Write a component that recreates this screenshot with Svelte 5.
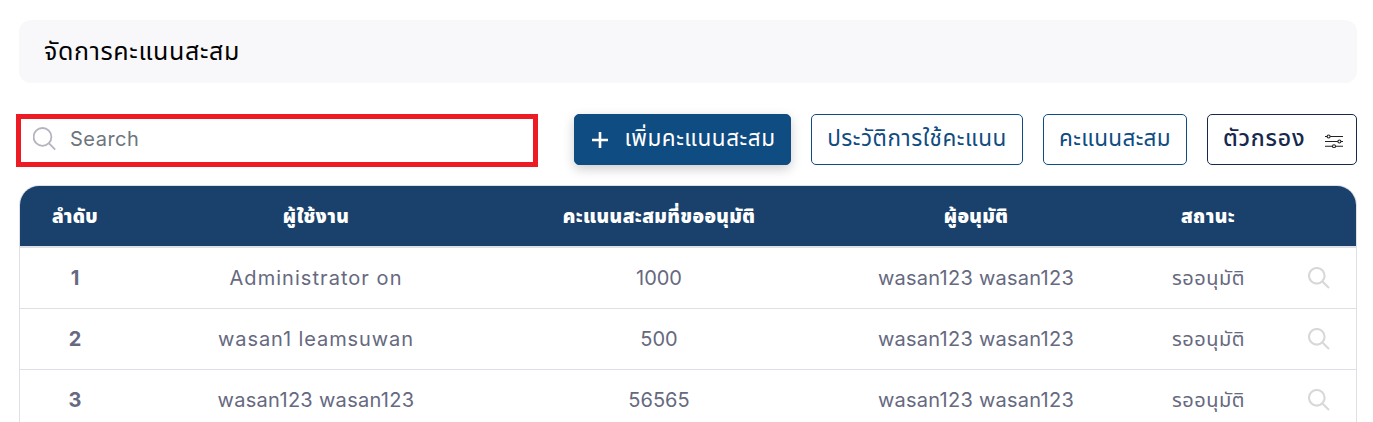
<script>
  const columns = ['ลำดับ', 'ผู้ใช้งาน', 'คะแนนสะสมที่ขออนุมัติ', 'ผู้อนุมัติ', 'สถานะ', ''];

  const rows = [
    { id: 1, user: 'Administrator on', tracking: 1.05, points: '1000', approver: 'wasan123 wasan123', status: 'รออนุมัติ' },
    { id: 2, user: 'wasan1 leamsuwan', tracking: 0.9, points: '500', approver: 'wasan123 wasan123', status: 'รออนุมัติ' },
    { id: 3, user: 'wasan123 wasan123', tracking: 0.3, points: '56565', approver: 'wasan123 wasan123', status: 'รออนุมัติ' }
  ];
</script>

<main>
  <header class="title"><h1>จัดการคะแนนสะสม</h1></header>

  <section class="toolbar">
    <label class="search">
      <svg width="24" height="24" viewBox="0 0 24 24" fill="none" stroke="#b5b4be" stroke-width="1.8">
        <circle cx="9.5" cy="9.9" r="8.9" />
        <path d="M15.8 16.2 22.2 22.6" />
      </svg>
      <input placeholder="Search" />
    </label>
    <button class="primary">
      <svg width="16" height="16" viewBox="0 0 16 16" stroke="#fff" stroke-width="2.6"><path d="M8 0v16M0 8h16" /></svg>
      <span>เพิ่มคะแนนสะสม</span>
    </button>
    <button class="history"><span>ประวัติการใช้คะแนน</span></button>
    <button class="points"><span>คะแนนสะสม</span></button>
    <button class="filter">
      <span>ตัวกรอง</span>
      <svg width="20" height="14" viewBox="0 0 20 14" fill="#fff" stroke="#222" stroke-width="1.1">
        <path d="M1 2.5h18M1 7.5h18M1 12.2h18" />
        <circle cx="4.6" cy="2.5" r="1.5" /><circle cx="15.4" cy="7.5" r="1.5" /><circle cx="10" cy="12.2" r="1.5" />
      </svg>
    </button>
  </section>

  <section class="table">
    <div class="row head">
      {#each columns as label}<div>{label}</div>{/each}
    </div>
    {#each rows as r}
      <div class="row">
        <div class="num">{r.id}</div>
        <div class="latin" style="letter-spacing: {r.tracking}px">{r.user}</div>
        <div class="latin">{r.points}</div>
        <div class="latin approver">{r.approver}</div>
        <div class="status">{r.status}</div>
        <div class="view">
          <svg width="22" height="22" viewBox="0 0 22 22" fill="none" stroke="#d8d8d8" stroke-width="2.1">
            <circle cx="8.8" cy="8.8" r="7.8" />
            <path d="M14.4 14.4 21 21" />
          </svg>
        </div>
      </div>
    {/each}
  </section>
</main>

<style>
  :global(body) { background: #fff; overflow: hidden; }
  main {
    box-sizing: border-box; height: 422px; padding: 20px 16px 0 19px; overflow: hidden;
    font-family: 'Noto Sans Thai', 'Inter', 'Open Sans', sans-serif;
  }
  .title {
    height: 63px; box-sizing: border-box; padding: 0 0 0 25px; border-radius: 12px;
    display: flex; align-items: center; background: #f8f8fb;
  }
  h1 { margin: 0; font-size: 25px; font-weight: 400; letter-spacing: .65px; color: #000; }
  .toolbar { display: flex; margin: 31px 0 0 -3px; height: 53px; align-items: flex-start; }
  .search {
    box-sizing: border-box; width: 522px; height: 53px; border: 5px solid #ed1c24;
    display: flex; align-items: center; padding: 0 0 3px 12px; gap: 13px; margin-right: 36px;
  }
  input { border: 0; outline: 0; padding: 0; flex: 1; background: none; font: 400 20px 'Inter', sans-serif; letter-spacing: .5px; }
  input::placeholder { color: #6c757d; opacity: 1; }
  button {
    box-sizing: border-box; height: 51px; border: 1px solid #0f4c81; border-radius: 5px; padding: 0 0 2px;
    display: flex; align-items: center; justify-content: center; background: #fff; color: #0f4c81;
    font: 400 22.5px 'Noto Sans Thai', 'Inter', sans-serif; letter-spacing: .55px; white-space: nowrap; flex: none;
  }
  .primary { width: 217px; margin-right: 20px; padding-left: 3px; background: #0f4c81; color: #fff; gap: 16px; box-shadow: 0 4px 12px rgba(0, 0, 0, .2); }
  .primary svg { margin-top: 2px; }
  .history { width: 212px; margin-right: 20px; }
  .points { width: 144px; margin-right: 20px; letter-spacing: .35px; }
  .filter { width: 150px; border-color: #16294d; color: #16294d; justify-content: flex-start; padding-left: 15px; gap: 19px; font-size: 23px; font-weight: 500; letter-spacing: .8px; }
  .filter svg { margin-top: 4px; }
  .table {
    box-sizing: border-box; margin-top: 18px; height: 300px; border: 1px solid #dfe0e5;
    border-radius: 20px 20px 0 0; overflow: hidden; width: 1338px;
  }
  .row {
    box-sizing: border-box; height: 61px; display: grid; grid-template-columns: 110px 372px 314px 320px 144px 76px;
    border-bottom: 1px solid #dee0e6; color: #666980; font-size: 20px;
  }
  .row > div { display: flex; align-items: center; justify-content: center; white-space: nowrap; padding-top: 2px; }
  .row.head { height: 62px; border-bottom: 2px solid #dee0e6; background: #19416c; color: #fff; font-weight: 900; font-size: 19px; letter-spacing: .4px; }
  .row .num { font-family: 'Inter', sans-serif; font-weight: 700; padding-top: 0; }
  .row .latin { font-family: 'Inter', sans-serif; padding-top: 0; }
  .row .approver { letter-spacing: .25px; }
  .row .status { letter-spacing: .5px; padding-left: 1px; }
  .row .view { padding: 0 0 0 1px; }
</style>
